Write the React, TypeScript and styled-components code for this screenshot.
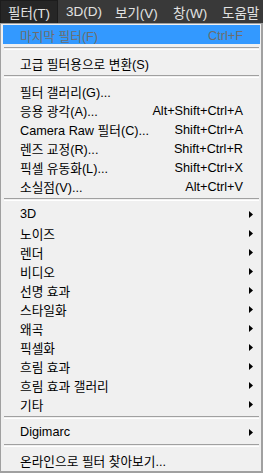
import React from "react";
import styled, { createGlobalStyle } from "styled-components";

const Global = createGlobalStyle`
  html, body { margin: 0; padding: 0; background: #f0f0f0; }
  body { width: 263px; height: 473px; overflow: hidden; }
`;

const FONT = `"Segoe UI", "Liberation Sans", "Noto Sans CJK KR", sans-serif`;

const Screen = styled.div`
  width: 263px;
  height: 473px;
  display: flex;
  flex-direction: column;
  font-family: ${FONT};
  overflow: hidden;
`;

const MenuBar = styled.div`
  height: 23px;
  flex: none;
  background: #393939;
  display: flex;
  align-items: stretch;
  white-space: nowrap;
  overflow: hidden;
`;

const BarItem = styled.div<{ $active?: boolean; $w: number }>`
  flex: none;
  width: ${(p) => p.$w}px;
  box-sizing: border-box;
  display: flex;
  align-items: center;
  padding-left: ${(p) => (p.$active ? 7 : 8)}px;
  font-size: 13.5px;
  color: #e2e2e2;
  background: ${(p) => (p.$active ? "#262626" : "transparent")};
  border: ${(p) => (p.$active ? "1px solid #1c1c1c" : "none")};
  border-bottom: none;
`;

const Dropdown = styled.div`
  flex: 1;
  background: #f0f0f0;
  border-top: 1px solid #a0a0a0;
  border-left: 1px solid #a0a0a0;
  border-right: 2px solid #a0a0a0;
  border-bottom: 2px solid #a0a0a0;
  padding: 1px 1px 2px 2px;
  display: flex;
  flex-direction: column;
`;

const Row = styled.div<{ $highlight?: boolean; $disabled?: boolean }>`
  height: 19px;
  flex: none;
  display: grid;
  grid-template-columns: 1fr auto 17px;
  align-items: center;
  padding-left: 17px;
  padding-top: 1px;
  box-sizing: border-box;
  font-size: 12.7px;
  color: ${(p) => (p.$disabled ? "#6d6d6d" : "#000")};
  background: ${(p) => (p.$highlight ? "#3399ff" : "transparent")};
  white-space: nowrap;
`;

const Label = styled.span``;
const Shortcut = styled.span`
  text-align: right;
`;

const ArrowCell = styled.span`
  display: flex;
  align-items: center;
  padding-left: 6px;
`;

const Separator = styled.div`
  height: 9px;
  flex: none;
  display: flex;
  align-items: flex-start;
  padding: 3px 1px 0 1px;
  box-sizing: border-box;
  &::before {
    content: "";
    display: block;
    width: 100%;
    height: 1px;
    border-top: 1px solid #a0a0a0;
    border-bottom: 1px solid #ffffff;
  }
`;

const Arrow = () => (
  <svg width="4" height="7" viewBox="0 0 4 7">
    <polygon points="0,0 4,3.5 0,7" fill="#000" />
  </svg>
);

type Item =
  | { type: "sep" }
  | { type: "item"; label: string; shortcut?: string; sub?: boolean; highlight?: boolean; disabled?: boolean };

const items: Item[] = [
  { type: "item", label: "마지막 필터(F)", shortcut: "Ctrl+F", highlight: true, disabled: true },
  { type: "sep" },
  { type: "item", label: "고급 필터용으로 변환(S)" },
  { type: "sep" },
  { type: "item", label: "필터 갤러리(G)..." },
  { type: "item", label: "응용 광각(A)...", shortcut: "Alt+Shift+Ctrl+A" },
  { type: "item", label: "Camera Raw 필터(C)...", shortcut: "Shift+Ctrl+A" },
  { type: "item", label: "렌즈 교정(R)...", shortcut: "Shift+Ctrl+R" },
  { type: "item", label: "픽셀 유동화(L)...", shortcut: "Shift+Ctrl+X" },
  { type: "item", label: "소실점(V)...", shortcut: "Alt+Ctrl+V" },
  { type: "sep" },
  { type: "item", label: "3D", sub: true },
  { type: "item", label: "노이즈", sub: true },
  { type: "item", label: "렌더", sub: true },
  { type: "item", label: "비디오", sub: true },
  { type: "item", label: "선명 효과", sub: true },
  { type: "item", label: "스타일화", sub: true },
  { type: "item", label: "왜곡", sub: true },
  { type: "item", label: "픽셀화", sub: true },
  { type: "item", label: "흐림 효과", sub: true },
  { type: "item", label: "흐림 효과 갤러리", sub: true },
  { type: "item", label: "기타", sub: true },
  { type: "sep" },
  { type: "item", label: "Digimarc", sub: true },
  { type: "sep" },
  { type: "item", label: "온라인으로 필터 찾아보기..." },
];

const bar = [
  { label: "필터(T)", w: 58, active: true },
  { label: "3D(D)", w: 49 },
  { label: "보기(V)", w: 58 },
  { label: "창(W)", w: 49 },
  { label: "도움말", w: 49 },
];

export default function App() {
  return (
    <Screen>
      <Global />
      <MenuBar>
        {bar.map((b) => (
          <BarItem key={b.label} $w={b.w} $active={b.active}>
            {b.label}
          </BarItem>
        ))}
      </MenuBar>
      <Dropdown>
        {items.map((it, i) =>
          it.type === "sep" ? (
            <Separator key={i} />
          ) : (
            <Row key={i} $highlight={it.highlight} $disabled={it.disabled}>
              <Label>{it.label}</Label>
              <Shortcut>{it.shortcut ?? ""}</Shortcut>
              <ArrowCell>{it.sub ? <Arrow /> : null}</ArrowCell>
            </Row>
          )
        )}
      </Dropdown>
    </Screen>
  );
}
